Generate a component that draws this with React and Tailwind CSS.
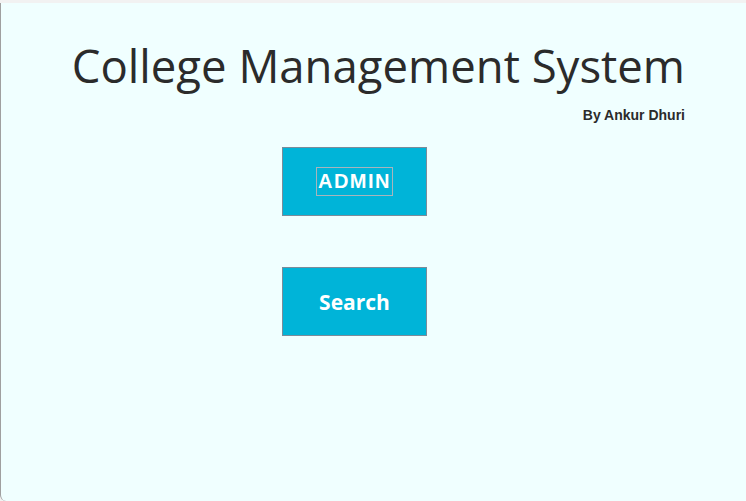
import React from "react";

const App = () => {
  return (
    <div className="w-[746px] h-[501px] bg-[#f2f2f2] pt-[3px] overflow-hidden">
      <div className="h-[498px] bg-[#f0ffff] border-l border-[#a0a0a0] rounded-bl-[6px]">
        {/* Header */}
        <div className="pr-[61px] pt-[34px] text-right">
          <h1
            className="text-[45.5px] leading-[56px] text-[#2b2b2b]"
            style={{ fontFamily: '"Open Sans", sans-serif' }}
          >
            College Management System
          </h1>
          <p
            className="mt-[12px] text-[14px] font-bold text-[#2b2b2b]"
            style={{ fontFamily: '"Liberation Sans", Arial, sans-serif' }}
          >
            By Ankur Dhuri
          </p>
        </div>

        {/* Buttons */}
        <div className="pl-[281px] pt-[21px] flex flex-col gap-[51px]">
          <button className="w-[145px] h-[69px] bg-[#00b4d8] border border-[#7a8c9a] flex items-center justify-center">
            <span
              className="border border-[#a8b4bc] px-[1px] text-[20px] leading-[27px] font-bold text-white tracking-[1.5px]"
              style={{ fontFamily: '"Liberation Sans", Arial, sans-serif' }}
            >
              ADMIN
            </span>
          </button>
          <button
            className="w-[145px] h-[69px] bg-[#00b4d8] border border-[#7a8c9a] pt-[3px] text-[21px] font-bold text-white"
            style={{ fontFamily: '"Open Sans", sans-serif' }}
          >
            Search
          </button>
        </div>
      </div>
    </div>
  );
};

export default App;
